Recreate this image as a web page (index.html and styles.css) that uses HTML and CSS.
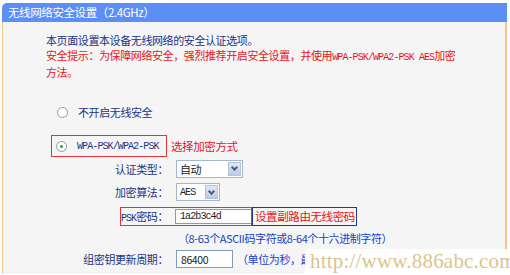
FILE: index.html
```html
<!DOCTYPE html>
<html lang="zh-CN">
<head>
  <meta charset="UTF-8" />
  <title>无线网络安全设置</title>
  <link rel="stylesheet" href="styles.css">
</head>
<body>
  <div class="panel">
    <div class="panel-title">无线网络安全设置（2.4GHz）</div>
    <div class="panel-body">
      <p class="intro">
        本页面设置本设备无线网络的安全认证选项。<br>
        <span class="warn">安全提示：为保障网络安全，强烈推荐开启安全设置，并使用<span class="latin">WPA-PSK/WPA2-PSK AES</span>加密<br>方法。</span>
      </p>

      <div class="option option-off">
        <span class="radio"></span>
        <span>不开启无线安全</span>
      </div>

      <div class="option option-psk">
        <span class="marked">
          <span class="radio checked"></span>
          <span class="latin">WPA-PSK/WPA2-PSK</span>
        </span>
        <span class="note">选择加密方式</span>
      </div>

      <div class="fields">
        <div class="row row-auth">
          <span class="label">认证类型：</span>
          <span class="select select-wide"><span class="select-text">自动</span><span class="select-btn"></span></span>
        </div>
        <div class="row row-algo">
          <span class="label">加密算法：</span>
          <span class="select select-narrow"><span class="select-text latin">AES</span><span class="select-btn"></span></span>
        </div>
        <div class="row row-psk">
          <span class="label"><span class="latin">PSK</span>密码：</span>
          <span class="input input-psk latin">1a2b3c4d</span>
          <span class="note note-boxed">设置副路由无线密码</span>
        </div>
        <div class="row row-hint">
          <span class="label"></span>
          <span class="hint">（8-63个ASCII码字符或8-64个十六进制字符）</span>
        </div>
        <div class="row row-period">
          <span class="label">组密钥更新周期：</span>
          <span class="input input-period">86400</span>
          <span class="hint">（单位为秒，最</span>
        </div>
      </div>
    </div>
  </div>

  <div class="watermark">http://www.886abc.com</div>
</body>
</html>
```

FILE: styles.css
```css
body {
  margin: 0;
  background: #fff;
  font-family: "Noto Sans CJK SC", "Liberation Sans", sans-serif;
  font-size: 11px;
  letter-spacing: -0.4px;
  color: #1d3384;
  overflow: hidden;
}
.panel {
  margin: 3px 3px 0 2px;
  width: 505px;
}
.panel-title {
  height: 19px;
  line-height: 19px;
  padding-left: 6px;
  background: #5c8ff6;
  color: #fff;
  border-radius: 5px 0 0 0;
  font-size: 11.5px;
}
.panel-body {
  background: #f5f5f5;
  border-left: 1px solid #f6c48a;
  border-right: 2px solid #f6c48a;
  height: 252px;
  overflow: hidden;
}
.latin {
  font-family: "Liberation Mono", monospace;
  font-size: 10px;
  letter-spacing: -0.9px;
}
.intro {
  margin: 0;
  padding: 11px 0 0 43px;
  line-height: 15px;
  white-space: nowrap;
}
.warn {
  color: #e8141b;
}
.option {
  display: flex;
  align-items: center;
  height: 22px;
  white-space: nowrap;
}
.option-off {
  margin-top: 21px;
  padding-left: 54px;
  gap: 10px;
}
.option-psk {
  margin-top: 12px;
  padding-left: 48px;
  gap: 4px;
}
.marked {
  display: flex;
  align-items: center;
  gap: 10px;
  height: 20px;
  width: 110px;
  padding-left: 4px;
  border: 1px solid #e0343a;
}
.radio {
  width: 9px;
  height: 9px;
  border: 1px solid #8b9aae;
  border-radius: 50%;
  background: #fff;
  display: flex;
  align-items: center;
  justify-content: center;
}
.radio.checked::after {
  content: "";
  width: 3px;
  height: 3px;
  border-radius: 50%;
  background: #2f9e38;
}
.note {
  color: #e8141b;
  font-size: 11.5px;
}
.fields {
  white-space: nowrap;
}
.row {
  display: flex;
  align-items: center;
  position: relative;
}
.row-auth { height: 23px; }
.row-algo { height: 24px; }
.row-psk { height: 24px; }
.row-hint { height: 20px; }
.row-period { height: 22px; }
.label {
  width: 165px;
  text-align: right;
  margin-right: 8px;
  flex: none;
}
.row-psk .label {
  margin-right: 7px;
}
.row-psk::before {
  content: "";
  position: absolute;
  left: 117px;
  top: 3px;
  width: 130px;
  height: 17px;
  border: 1px solid #e0343a;
}
.select {
  display: flex;
  align-items: center;
  justify-content: space-between;
  height: 16px;
  border: 1px solid #a5b7cd;
  background: #fff;
  padding: 0 1px 0 3px;
  color: #222;
}
.select-wide { width: 61px; }
.select-narrow { width: 38px; }
.select-btn {
  width: 13px;
  height: 14px;
  background: linear-gradient(#dfe8f7, #bccbe6);
  border: 1px solid #b4c3dc;
  box-sizing: border-box;
  display: flex;
  align-items: center;
  justify-content: center;
}
.select-btn::after {
  content: "";
  width: 3px;
  height: 3px;
  border-right: 2px solid #4c5d80;
  border-bottom: 2px solid #4c5d80;
  transform: translateY(-1px) rotate(45deg);
}
.input {
  display: flex;
  align-items: center;
  background: #fff;
  border: 1px solid #7f9db9;
  color: #222;
  padding-left: 4px;
  box-sizing: border-box;
}
.input-psk {
  width: 77px;
  height: 15px;
}
.note-boxed {
  position: relative;
  height: 19px;
  line-height: 17px;
  width: 105px;
  box-sizing: border-box;
  padding-left: 2px;
  border: 1px solid #23398a;
}
.input-period {
  width: 57px;
  height: 18px;
  font-size: 10.5px;
}
.hint {
  color: #1540c8;
  margin-left: 2px;
}
.row-period .hint {
  margin-left: 4px;
}
.watermark {
  position: absolute;
  left: 305px;
  top: 249px;
  width: 205px;
  height: 25px;
  padding-left: 5px;
  box-sizing: border-box;
  background: rgba(255, 255, 255, 0.92);
  font-family: "Liberation Serif", serif;
  font-size: 21px;
  letter-spacing: 0.2px;
  line-height: 25px;
  color: #dbc58d;
  white-space: nowrap;
}
```
